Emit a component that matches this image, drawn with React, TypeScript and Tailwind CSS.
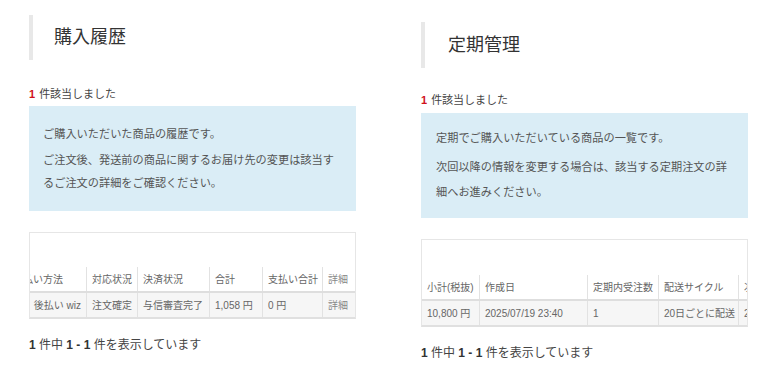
import React from "react";

type Col = { w: string; head: string; cell: string; alignRight?: boolean; muted?: boolean; last?: boolean };

const historyCols: Col[] = [
  { w: "w-[79px]", head: "支払い方法", cell: "後払い wiz", alignRight: true },
  { w: "w-[51px]", head: "対応状況", cell: "注文確定" },
  { w: "w-[72px]", head: "決済状況", cell: "与信審査完了" },
  { w: "w-[53px]", head: "合計", cell: "1,058 円" },
  { w: "w-[60px]", head: "支払い合計", cell: "0 円" },
  { w: "w-[32px]", head: "詳細", cell: "詳細", muted: true, last: true },
];

const regularCols: Col[] = [
  { w: "w-[58px]", head: "小計(税抜)", cell: "10,800 円" },
  { w: "w-[108px]", head: "作成日", cell: "2025/07/19 23:40" },
  { w: "w-[71px]", head: "定期内受注数", cell: "1" },
  { w: "w-[80px]", head: "配送サイクル", cell: "20日ごとに配送" },
  { w: "w-[110px]", head: "次回配送予定日", cell: "2025/08/08", last: true },
];

function Cell({ col, text, rowH }: { col: Col; text: string; rowH: string }) {
  return (
    <div
      className={`${col.w} ${rowH} shrink-0 flex items-center whitespace-nowrap overflow-hidden ${
        col.last ? "" : "border-r border-[#e2e2e2]"
      } ${col.alignRight && text !== col.head ? "justify-end pr-[5px]" : "pl-[5px]"} ${
        col.muted ? "text-[#888]" : "text-[#666]"
      }`}
    >
      {text}
    </div>
  );
}

function ResultTable({
  cols,
  offset,
  spacer,
  headH,
}: {
  cols: Col[];
  offset: string;
  spacer: string;
  headH: string;
}) {
  return (
    <div className="border border-[#e6e6e6] border-b-2 border-b-[#e0e0e0] overflow-hidden bg-white">
      <div className={spacer} />
      <div className={`flex flex-col w-max text-[10px] ${offset}`}>
        <div className="flex border-b-2 border-[#dedede] bg-white">
          {cols.map((c) => (
            <Cell key={c.head} col={c} text={c.head} rowH={headH} />
          ))}
        </div>
        <div className="flex bg-[#f6f6f6]">
          {cols.map((c) => (
            <Cell key={c.head} col={c} text={c.cell} rowH="h-[24px]" />
          ))}
        </div>
      </div>
    </div>
  );
}

function Panel({
  title,
  first,
  second,
  cols,
  offset,
  top,
  headH,
  headPl,
  countMt,
  boxMt,
  boxCls,
  lineCls,
  paraMt,
  spacer,
  rowHeadH,
}: {
  title: string;
  first: string;
  second: string;
  cols: Col[];
  offset: string;
  top: string;
  headH: string;
  headPl: string;
  countMt: string;
  boxMt: string;
  boxCls: string;
  lineCls: string;
  paraMt: string;
  spacer: string;
  rowHeadH: string;
}) {
  return (
    <section className={`w-[327px] shrink-0 ${top}`}>
      <h2
        className={`${headH} ${headPl} border-l-4 border-[#e8e8e8] flex items-center text-[18px] text-[#333] font-normal`}
      >
        {title}
      </h2>

      <p className={`${countMt} h-[16px] leading-[16px] text-[11px] text-[#444]`}>
        <span className="font-bold text-[#d0111b] mr-[4px]">1</span>件該当しました
      </p>

      <div className={`${boxMt} bg-[#daedf6] ${boxCls} text-[11.2px] text-[#555]`}>
        <p className={lineCls}>{first}</p>
        <p className={`${lineCls} ${paraMt} w-[296px]`}>{second}</p>
      </div>

      <div className="mt-[21px]">
        <ResultTable cols={cols} offset={offset} spacer={spacer} headH={rowHeadH} />
      </div>

      <p className="mt-[17px] leading-[18px] text-[12px] text-[#444]">
        <b className="text-[#333]">1</b> 件中 <b className="text-[#333]">1 - 1</b> 件を表示しています
      </p>
    </section>
  );
}

export default function App() {
  return (
    <div className="w-[777px] h-[384px] overflow-hidden bg-white flex gap-[65px] pl-[29px] font-['Liberation_Sans','Noto_Sans_CJK_JP',sans-serif]">
      <Panel
        title="購入履歴"
        first="ご購入いただいた商品の履歴です。"
        second="ご注文後、発送前の商品に関するお届け先の変更は該当するご注文の詳細をご確認ください。"
        cols={historyCols}
        offset="-ml-[22px]"
        top="pt-[15px]"
        headH="h-[45px]"
        headPl="pl-[21px]"
        countMt="mt-[26px]"
        boxMt="mt-[4px]"
        boxCls="pl-[14px] pt-[17px] pb-[16px]"
        lineCls="leading-[23px]"
        paraMt="mt-[3px]"
        spacer="h-[34px]"
        rowHeadH="h-[24px]"
      />
      <Panel
        title="定期管理"
        first="定期でご購入いただいている商品の一覧です。"
        second="次回以降の情報を変更する場合は、該当する定期注文の詳細へお進みください。"
        cols={regularCols}
        offset="ml-0"
        top="pt-[22px]"
        headH="h-[46px]"
        headPl="pl-[23px]"
        countMt="mt-[24px]"
        boxMt="mt-[5px]"
        boxCls="pl-[15px] pt-[13px] pb-[13px]"
        lineCls="leading-[25px]"
        paraMt="mt-[4px]"
        spacer="h-[35px]"
        rowHeadH="h-[24px]"
      />
    </div>
  );
}
